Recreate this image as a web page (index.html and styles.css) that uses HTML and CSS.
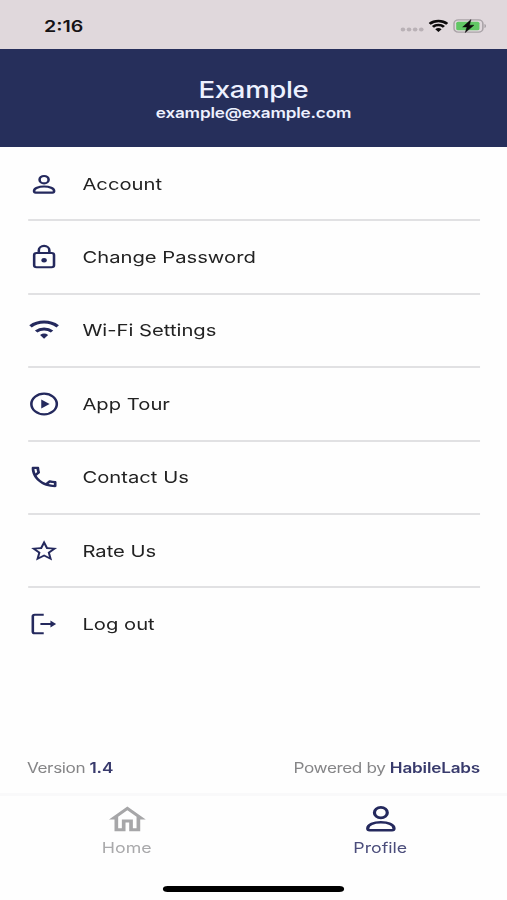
FILE: index.html
```html
<!DOCTYPE html>
<html lang="en">
<head>
	<meta charset="utf-8">
	<title>Profile</title>
	<meta name="viewport" content="width=device-width, initial-scale=1.0">
	<link rel="stylesheet" href="styles.css">
</head>
<body>
<div class="screen">
	<div class="status">
		<span class="time">2:16</span>
		<div class="signals">
			<svg class="dots" width="20" height="14" viewBox="0 0 20 14"><circle cx="2" cy="10.500" r="1.900"/><circle cx="7" cy="10.500" r="1.900"/><circle cx="12" cy="10.500" r="1.900"/><circle cx="17" cy="10.500" r="1.900"/></svg>
			<svg class="wifi" width="16" height="14" viewBox="0 0 16 14"><path d="M.8 4.800a10.400 10.400 0 0 1 14.400 0M3.500 7.900a6.500 6.500 0 0 1 9 0" fill="none" stroke="#0c0a0b" stroke-width="2.500"/><path d="M5.400 10.200a4 4 0 0 1 5.200 0L8 13z" fill="#0c0a0b"/></svg>
			<svg class="battery" width="28" height="14" viewBox="0 0 28 14"><rect x=".7" y=".9" width="23.600" height="12.200" rx="3.600" fill="none" stroke="#a9a3a7" stroke-width="1.300"/><rect x="2.500" y="2.700" width="19" height="8.600" rx="1.600" fill="#62c765"/><path d="M25.600 5v4c.8-.3 1.300-1.100 1.300-2s-.5-1.700-1.300-2z" fill="#a9a3a7"/><path d="M14.600.6L7.800 8h3.500l-1.400 5.600L17 6.200h-3.700z" fill="#0c0a0b" stroke="#0c0a0b" stroke-width=".4"/></svg>
		</div>
	</div>

	<div class="header">
		<div class="name">Example</div>
		<div class="email">example@example.com</div>
	</div>

	<ul class="menu">
		<li>
			<svg class="line" width="28" height="28" viewBox="0 0 28 28"><circle cx="14" cy="9.700" r="3.700"/><path d="M14 16.500c-4.400 0-8.200 1.700-8.200 4.600 0 1 .5 1.500 1.300 1.500h13.800c.8 0 1.300-.5 1.300-1.500 0-2.900-3.800-4.600-8.200-4.600z"/></svg>
			<span>Account</span>
		</li>
		<li>
			<svg class="line" width="28" height="28" viewBox="0 0 28 28"><rect x="5.900" y="10" width="16.200" height="14.300" rx="2"/><path d="M9.700 10V7.200a4.300 4.300 0 0 1 8.600 0V10"/><circle class="solid" cx="14" cy="17.200" r="2.200"/></svg>
			<span>Change Password</span>
		</li>
		<li>
			<svg class="line" width="28" height="28" viewBox="0 0 28 28"><path d="M2.900 10.300a16.600 16.600 0 0 1 22.200 0M7.500 15.500a9.800 9.800 0 0 1 13 0" stroke-width="3"/><path class="solid" d="M10.700 19a5 5 0 0 1 6.600 0L14 22.700z"/></svg>
			<span>Wi-Fi Settings</span>
		</li>
		<li>
			<svg class="line" width="28" height="28" viewBox="0 0 28 28"><circle cx="14" cy="14" r="10.400"/><path class="solid" d="M11.700 9.400v9.200l6.800-4.600z"/></svg>
			<span>App Tour</span>
		</li>
		<li>
			<svg width="28" height="28" viewBox="-.4 -.4 24.800 24.800"><path d="M20 15.500C18.800 15.500 17.500 15.300 16.400 14.900C16.300 14.900 16.200 14.900 16.100 14.900C15.800 14.900 15.600 15 15.400 15.200L13.200 17.400C10.400 15.900 8 13.600 6.600 10.800L8.800 8.600C9.100 8.300 9.200 7.900 9 7.600C8.700 6.500 8.500 5.200 8.500 4C8.500 3.500 8 3 7.500 3H4C3.500 3 3 3.500 3 4C3 13.400 10.600 21 20 21C20.500 21 21 20.500 21 20V16.500C21 16 20.500 15.500 20 15.500M5 5H6.500C6.600 5.900 6.800 6.800 7 7.600L5.800 8.800C5.400 7.600 5.100 6.300 5 5M19 19C17.700 18.900 16.400 18.600 15.200 18.200L16.400 17C17.200 17.200 18.100 17.400 19 17.400V19Z"/></svg>
			<span>Contact Us</span>
		</li>
		<li>
			<svg width="28" height="28" viewBox="-1.200 -1.100 26.400 26.400"><path d="M12,15.390L8.240,17.660L9.230,13.380L5.910,10.500L10.290,10.130L12,6.090L13.710,10.130L18.090,10.500L14.770,13.380L15.760,17.660M22,9.240L14.810,8.630L12,2L9.190,8.630L2,9.240L7.450,13.970L5.820,21L12,17.270L18.180,21L16.540,13.970L22,9.240Z"/></svg>
			<span>Rate Us</span>
		</li>
		<li>
			<svg class="line" width="28" height="28" viewBox="0 0 28 28"><path d="M13.700 4.700H6.300c-1 0-1.500.5-1.500 1.500v15.500c0 1 .5 1.500 1.500 1.500h7.400M11 14h9"/><path class="solid" d="M19.200 10.500v7l4.600-3.500z"/></svg>
			<span>Log out</span>
		</li>
	</ul>

	<div class="about">
		<div class="version">Version <b>1.4</b></div>
		<div class="powered">Powered by <b>HabileLabs</b></div>
	</div>

	<div class="tabs">
		<div class="tab">
			<svg width="36" height="35" viewBox="0 0 24 24" preserveAspectRatio="none"><path d="M12 5.690L17 10.190V18H15V12H9V18H7V10.190L12 5.690M12 3L2 12H5V20H11V14H13V20H19V12H22"/></svg>
			<span>Home</span>
		</div>
		<div class="tab active">
			<svg class="line" width="36" height="35" viewBox="0 0 28 28"><circle cx="14" cy="8.500" r="4.200"/><path d="M14 16.200c-4.700 0-8.600 1.800-8.600 5 0 .9.500 1.400 1.300 1.400h14.600c.8 0 1.300-.5 1.300-1.400 0-3.200-3.900-5-8.600-5z"/></svg>
			<span>Profile</span>
		</div>
	</div>
	<div class="bar"></div>
</div>
</body>
</html>
```

FILE: styles.css
```css
body {margin:0; background:#fefefe; overflow:hidden; font-family:Inter,"Liberation Sans",sans-serif;}

/* 414 wide phone layout stretched over the window */
.screen {
	width: 414px;
	height: 900px;
	display: flex;
	flex-direction: column;
	transform: scaleX(1.22464);
	transform-origin: 0 0;
}
svg {display:block; flex:none;}

.status {
	height: 49px;
	box-sizing: border-box;
	padding: 2px 16px 0 36px;
	display: flex;
	align-items: center;
	justify-content: space-between;
	background: #e0d8dc;
}
.time {font-size:16px; font-weight:600; color:#161315;}
.signals {display:flex;}
.dots {fill:#b9b1b6;}
.wifi {margin-left:3px;}
.battery {margin-left:4px;}

.header {
	height: 98px;
	box-sizing: border-box;
	padding-top: 27px;
	background: #262f5b;
	color: #edf1ff;
	text-align: center;
}
.name {font-size:22.5px; line-height:27px; font-weight:500; letter-spacing:-.28px;}
.email {font-size:14px; line-height:19px; font-weight:600; letter-spacing:-.14px;}

.menu {list-style:none; margin:1px 22px 0 23px; padding:0;}
.menu li {
	height: 73.4px;
	box-sizing: border-box;
	display: flex;
	align-items: center;
	gap: 17px;
	border-bottom: 2px solid #e1e1e3;
	font-size: 16.5px;
	color: #222;
}
.menu li:last-child {border-color:transparent;}
.menu svg {margin-left:-.7px; fill:#24295d;}
svg.line {fill:none; stroke:#24295d; stroke-width:2.1;}
.line .solid {fill:#24295d; stroke:none;}

.about {
	margin: auto 22px 0 22px;
	height: 36px;
	display: flex;
	justify-content: space-between;
	font-size: 14px;
	line-height: 22px;
	letter-spacing: -.33px;
	color: #858587;
}
.about b {font-weight:600; letter-spacing:-.15px; color:#383a6c;}

.tabs {
	height: 87px;
	display: flex;
	border-top: 3px solid #f9f9fa;
}
.tab {
	flex: 1;
	display: flex;
	flex-direction: column;
	align-items: center;
	padding-top: 6px;
	font-size: 14.5px;
	line-height: 20px;
	color: #a9a9ab;
}
.tab span {margin-top:1px;}
.tab svg {fill:#a6a6a8;}
.tab svg.line {fill:none;}
.active {color:#4b4d7b;}

.bar {
	width: 148px;
	height: 6px;
	margin: 3px auto 8px;
	border-radius: 4px / 3px;
	background: #000;
}
```
